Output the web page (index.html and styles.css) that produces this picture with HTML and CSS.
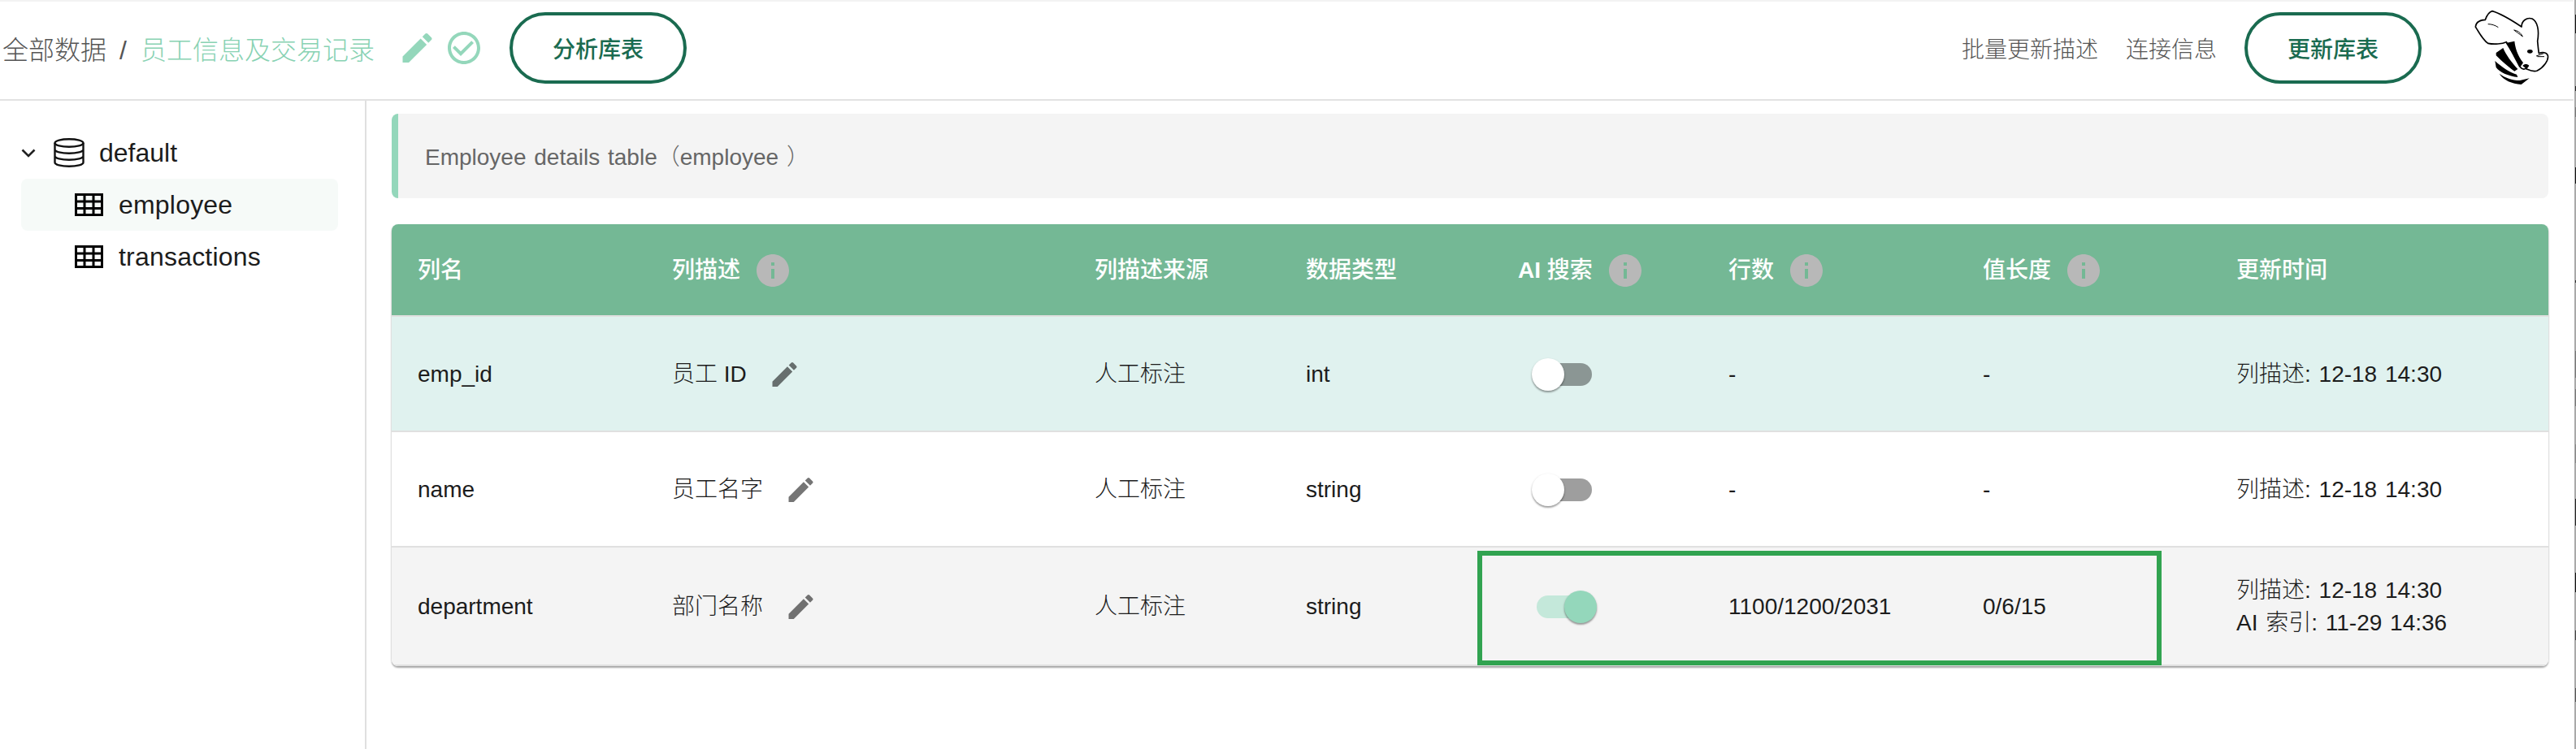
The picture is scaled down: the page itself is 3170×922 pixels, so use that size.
FILE: index.html
```html
<!DOCTYPE html>
<html lang="zh">
<head>
<meta charset="utf-8">
<title>员工信息及交易记录</title>
<link rel="stylesheet" href="styles.css">
</head>
<body>
<div class="shell">
  <div class="page">
    <header class="topbar">
      <nav class="crumbs">
        <span class="crumb-root">全部数据</span>
        <span class="crumb-sep">/</span>
        <span class="crumb-current">员工信息及交易记录</span>
      </nav>
      <svg class="icon-edit-top" viewBox="3 3 18 18"><path d="M3 17.25V21h3.75L17.81 9.94l-3.75-3.75L3 17.25zM20.71 7.04c.39-.39.39-1.02 0-1.41l-2.34-2.34c-.39-.39-1.02-.39-1.41 0l-1.83 1.83 3.75 3.75 1.83-1.83z"/></svg>
      <svg class="icon-check-top" viewBox="2 2 20 20"><path d="M16.59 7.58 10 14.17l-3.59-3.58L5 12l5 5 8-8zM12 2C6.48 2 2 6.48 2 12s4.48 10 10 10 10-4.48 10-10S17.52 2 12 2zm0 18c-4.42 0-8-3.58-8-8s3.58-8 8-8 8 3.58 8 8-3.58 8-8 8z"/></svg>
      <button class="pill pill-analyze">分析库表</button>
      <div class="top-actions">
        <span class="top-link">批量更新描述</span>
        <span class="top-link">连接信息</span>
        <button class="pill">更新库表</button>
        <svg class="logo" viewBox="0 0 300 300">
          <path class="logo-line" d="M16 72C18 55 30 47 52 46C58 30 66 17 78 14C105 22 150 48 186 72C186 50 205 36 225 42C245 52 252 85 245 125C247 145 248 158 250 170C262 165 278 165 283 178C287 195 268 222 244 234C228 240 215 232 200 226C192 232 180 225 172 205C155 175 145 150 130 128C115 135 85 138 62 133C45 122 28 92 16 72Z"/>
          <path class="logo-ink" d="M128 132L160 125C163 150 170 175 192 205L180 222C165 190 145 160 128 132Z"/>
          <path class="logo-ink" d="M92 168L118 150C128 175 150 205 172 228L160 236C135 220 110 195 92 178Z"/>
          <path class="logo-ink" d="M88 198C115 222 140 240 168 248L172 258C140 255 105 240 92 222Z"/>
          <path class="logo-ink" d="M104 245C125 260 150 270 180 270L215 262L185 285C150 282 120 270 104 245Z"/>
          <path class="logo-ink" d="M190 216C196 208 208 208 214 216L205 228Z"/>
          <ellipse class="logo-ink" cx="217" cy="163" rx="10" ry="7"/>
          <path class="logo-thin" d="M240 180L268 170M244 182L270 182M158 84C170 86 182 92 190 108C178 98 168 92 158 84ZM62 62C75 62 88 66 100 74"/>
        </svg>
      </div>
    </header>
    <div class="workspace">
      <aside class="sidebar">
        <div class="tree-db">
          <svg class="chevron" viewBox="0 0 18 11"><path d="M1.5 1.5L9 9l7.5-7.5"/></svg>
          <svg class="icon-db" viewBox="0 0 38 36"><ellipse cx="19" cy="6" rx="17.5" ry="4.8"/><path d="M1.5 6v24c0 2.7 7.8 4.8 17.5 4.8S36.500 32.700 36.500 30V6M1.500 14c0 2.700 7.800 4.800 17.500 4.800S36.500 16.700 36.500 14M1.500 22c0 2.700 7.800 4.800 17.500 4.800S36.500 24.700 36.500 22"/></svg>
          <span>default</span>
        </div>
        <div class="tree-table is-selected">
          <svg class="icon-table" viewBox="0 0 35 28"><path d="M1.500 1.500h32v25h-32zM12 1.500v25M23 1.500v25M1.500 10h32M1.500 18.500h32"/></svg>
          <span>employee</span>
        </div>
        <div class="tree-table">
          <svg class="icon-table" viewBox="0 0 35 28"><path d="M1.500 1.500h32v25h-32zM12 1.500v25M23 1.500v25M1.500 10h32M1.500 18.500h32"/></svg>
          <span>transactions</span>
        </div>
      </aside>
      <main class="content">
        <div class="table-note">Employee details table（employee ）</div>
        <div class="card">
          <table class="columns">
            <colgroup>
              <col class="c-name"><col class="c-desc"><col class="c-source"><col class="c-type"><col class="c-ai"><col class="c-rows"><col class="c-len"><col class="c-time">
            </colgroup>
            <thead>
              <tr>
                <th>列名</th>
                <th><span class="th-inner">列描述<svg class="icon-info" viewBox="2 2 20 20"><path d="M12 2C6.48 2 2 6.48 2 12s4.48 10 10 10 10-4.48 10-10S17.52 2 12 2zm1 15h-2v-6h2v6zm0-8h-2V7h2v2z"/></svg></span></th>
                <th>列描述来源</th>
                <th>数据类型</th>
                <th><span class="th-inner"><span><b class="th-latin">AI</b> 搜索</span><svg class="icon-info" viewBox="2 2 20 20"><path d="M12 2C6.48 2 2 6.48 2 12s4.48 10 10 10 10-4.48 10-10S17.52 2 12 2zm1 15h-2v-6h2v6zm0-8h-2V7h2v2z"/></svg></span></th>
                <th><span class="th-inner">行数<svg class="icon-info" viewBox="2 2 20 20"><path d="M12 2C6.48 2 2 6.48 2 12s4.48 10 10 10 10-4.48 10-10S17.52 2 12 2zm1 15h-2v-6h2v6zm0-8h-2V7h2v2z"/></svg></span></th>
                <th><span class="th-inner">值长度<svg class="icon-info" viewBox="2 2 20 20"><path d="M12 2C6.48 2 2 6.48 2 12s4.48 10 10 10 10-4.48 10-10S17.52 2 12 2zm1 15h-2v-6h2v6zm0-8h-2V7h2v2z"/></svg></span></th>
                <th>更新时间</th>
              </tr>
            </thead>
            <tbody>
              <tr class="row-hover">
                <td>emp_id</td>
                <td><span class="desc">员工 ID<svg class="icon-edit" viewBox="3 3 18 18"><path d="M3 17.25V21h3.75L17.81 9.94l-3.75-3.75L3 17.25zM20.71 7.04c.39-.39.39-1.02 0-1.41l-2.34-2.34c-.39-.39-1.02-.39-1.41 0l-1.83 1.83 3.75 3.75 1.83-1.83z"/></svg></span></td>
                <td>人工标注</td>
                <td>int</td>
                <td><span class="switch"><span class="thumb"></span></span></td>
                <td>-</td>
                <td>-</td>
                <td class="time">列描述: 12-18 14:30</td>
              </tr>
              <tr>
                <td>name</td>
                <td><span class="desc">员工名字<svg class="icon-edit" viewBox="3 3 18 18"><path d="M3 17.25V21h3.75L17.81 9.94l-3.75-3.75L3 17.25zM20.71 7.04c.39-.39.39-1.02 0-1.41l-2.34-2.34c-.39-.39-1.02-.39-1.41 0l-1.83 1.83 3.75 3.75 1.83-1.83z"/></svg></span></td>
                <td>人工标注</td>
                <td>string</td>
                <td><span class="switch"><span class="thumb"></span></span></td>
                <td>-</td>
                <td>-</td>
                <td class="time">列描述: 12-18 14:30</td>
              </tr>
              <tr class="row-alt">
                <td>department</td>
                <td><span class="desc">部门名称<svg class="icon-edit" viewBox="3 3 18 18"><path d="M3 17.25V21h3.75L17.81 9.94l-3.75-3.75L3 17.25zM20.71 7.04c.39-.39.39-1.02 0-1.41l-2.34-2.34c-.39-.39-1.02-.39-1.41 0l-1.83 1.83 3.75 3.75 1.83-1.83z"/></svg></span></td>
                <td>人工标注</td>
                <td>string</td>
                <td><span class="switch is-on"><span class="thumb"></span></span></td>
                <td>1100/1200/2031</td>
                <td>0/6/15</td>
                <td class="time">列描述: 12-18 14:30<br>AI 索引: 11-29 14:36</td>
              </tr>
            </tbody>
          </table>
          <div class="callout"></div>
        </div>
      </main>
    </div>
  </div>
  <div class="edge"></div>
</div>
</body>
</html>
```

FILE: styles.css
```css
* { box-sizing: border-box; }
html, body { margin: 0; height: 100%; background: #fff; }
body {
  font-family: "Liberation Sans", "Noto Sans CJK SC", sans-serif;
  font-size: 28px;
  font-weight: 300;
  color: #1c1c1c;
  overflow: hidden;
}
.shell { display: flex; height: 922px; }
.page { flex: 1; min-width: 0; display: flex; flex-direction: column; }
.edge {
  width: 3px;
  border-left: 1px solid #fff;
  background: linear-gradient(to right, #a8a8a8 0 1px, transparent 1px),
    linear-gradient(to bottom,
      #aaa 0 18px, #111 18px 41px, #aaa 41px 106px, #222 106px 112px, #aaa 112px 132px, #777 132px 144px, #aaa 144px 206px,
      #111 206px 226px, #aaa 226px 345px, #333 345px 348px, #aaa 348px 432px, #777 432px 465px, #aaa 465px 479px, #777 479px 500px,
      #aaa 500px 547px, #888 547px 570px, #aaa 570px 614px, #222 614px 647px, #aaa 647px 705px, #111 705px 729px, #aaa 729px 776px,
      #444 776px 788px, #aaa 788px 847px, #555 847px 864px, #aaa 864px);
}

/* top bar */
.topbar {
  height: 124px;
  flex: none;
  display: flex;
  align-items: center;
  padding: 0 26px 6px 3px;
  border-top: 2px solid #f3f3f3;
  border-bottom: 2px solid #e2e2e2;
}
.crumbs { display: flex; align-items: baseline; gap: 16px; font-size: 32px; color: #555; }
.crumb-current { color: #88d2b3; margin-left: 1px; }
.crumb-sep { width: 9px; }
.icon-edit-top { width: 37px; height: 36px; margin-left: 34px; fill: #94d7bb; }
.icon-check-top { width: 40px; height: 40px; margin-left: 19px; fill: #94d7bb; }
.pill {
  width: 218px;
  height: 88px;
  border: 4px solid #1a6b50;
  border-radius: 44px;
  background: #fff;
  color: #1a6b50;
  font: 500 28px "Liberation Sans", "Noto Sans CJK SC", sans-serif;
  padding: 0;
}
.pill-analyze { margin-left: 36px; }
.top-actions { margin-left: auto; display: flex; align-items: center; gap: 34px; }
.top-link { color: #555; }
.logo { width: 100px; height: 100px; margin-left: 27px; }
.logo-line { fill: #fff; stroke: #000; stroke-width: 5; stroke-linejoin: round; }
.logo-ink { fill: #000; }
.logo-thin { fill: none; stroke: #000; stroke-width: 3; }

/* sidebar */
.workspace { flex: 1; display: flex; min-height: 0; }
.sidebar {
  width: 451px;
  flex: none;
  border-right: 2px solid #e0e0e0;
  padding: 32px 33px 0 26px;
  font-size: 32px;
}
.tree-db { display: flex; align-items: center; height: 64px; }
.chevron { width: 18px; height: 11px; margin-right: 22px; fill: none; stroke: #222; stroke-width: 2.6; }
.icon-db { width: 38px; height: 36px; margin-right: 18px; fill: none; stroke: #111; stroke-width: 2.4; }
.tree-table { display: flex; align-items: center; height: 64px; padding-left: 66px; letter-spacing: .2px; }
.tree-table.is-selected { background: #f6faf8; border-radius: 8px; }
.icon-table { width: 35px; height: 28px; margin-right: 19px; fill: none; stroke: #000; stroke-width: 3; }

/* content */
.content { flex: 1; min-width: 0; padding: 16px 31px 0; }
.table-note {
  height: 104px;
  display: flex;
  align-items: center;
  padding: 0 0 3px 33px;
  background: #f4f4f4;
  border-left: 8px solid #94d7bb;
  border-radius: 8px;
  color: #666;
  word-spacing: 2px;
  margin-bottom: 32px;
}
.card {
  position: relative;
  border-radius: 8px;
  box-shadow: 0 2px 2px rgba(0, 0, 0, .3), 0 1px 3px rgba(0, 0, 0, .12);
  overflow: hidden;
}
.columns { width: 2654px; table-layout: fixed; border-collapse: separate; border-spacing: 0; }
.c-name { width: 312px; }
.c-desc { width: 520px; }
.c-source { width: 260px; }
.c-type { width: 261px; }
.c-ai { width: 259px; }
.c-rows { width: 313px; }
.c-len { width: 312px; }
.c-time { width: 417px; }
th, td {
  padding: 2px 0 0 33px;
  text-align: left;
  line-height: 40px;
  border-bottom: 2px solid #e0e0e0;
  white-space: nowrap;
}
th:first-child, td:first-child { padding-left: 32px; }
th { height: 114px; background: #74b895; color: #fff; font-weight: 500; }
.th-latin { font-weight: 700; }
td { height: 142px; }
.time { word-spacing: 2px; }
.row-hover td { background: #e0f2ef; }
.row-alt td { height: 146px; background: #f4f4f4; }
.th-inner { display: flex; align-items: center; gap: 20px; }
.icon-info { width: 40px; height: 40px; fill: #b8b8b8; fill-rule: evenodd; }
.desc { display: flex; align-items: center; gap: 31px; }
.icon-edit { width: 31px; height: 30px; fill: rgba(0, 0, 0, .54); }
.switch {
  display: block;
  position: relative;
  width: 68px;
  height: 28px;
  margin-left: 23px;
  border-radius: 14px;
  background: rgba(0, 0, 0, .38);
}
.thumb {
  position: absolute;
  left: -6px;
  top: -6px;
  width: 40px;
  height: 40px;
  border-radius: 50%;
  background: #fff;
  box-shadow: 0 2px 2px rgba(0, 0, 0, .3), 0 1px 3px rgba(0, 0, 0, .15);
}
.switch.is-on { background: #c4e8da; }
.switch.is-on .thumb { left: 34px; background: #94d7bb; }
.callout {
  position: absolute;
  left: 1336px;
  top: 402px;
  width: 842px;
  height: 141px;
  border: 6px solid #31a350;
}
```
